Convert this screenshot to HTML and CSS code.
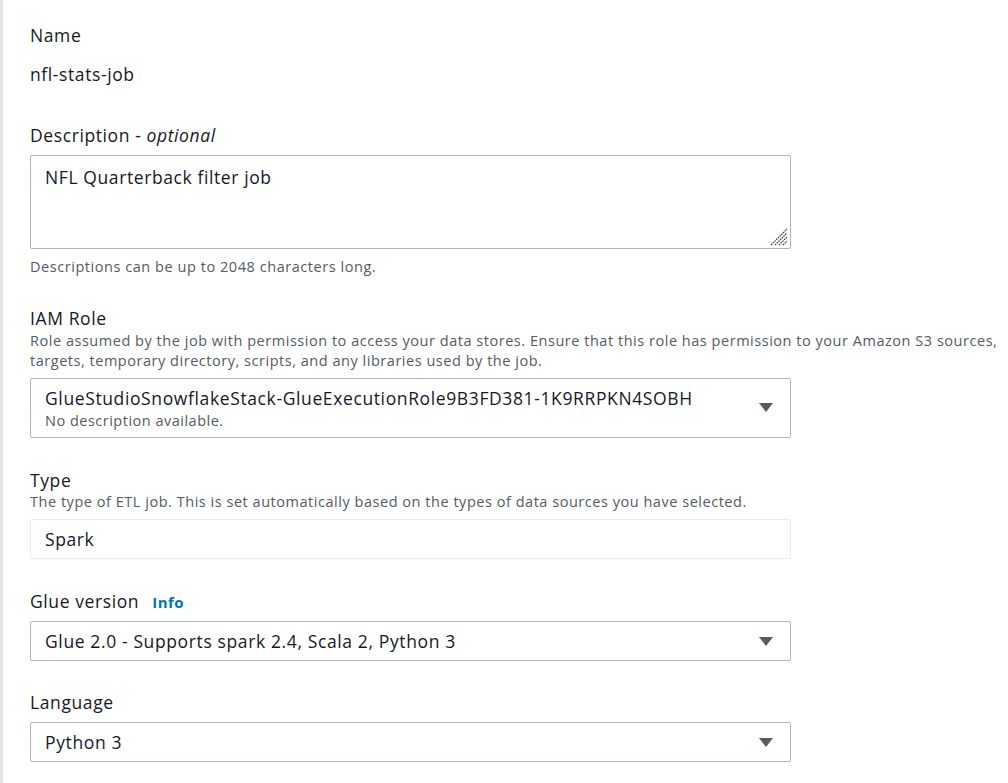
FILE: index.html
```html
<!DOCTYPE html>
<html lang="en">
<head>
<meta charset="utf-8">
<title>Job details</title>
<link rel="stylesheet" href="styles.css">
</head>
<body>
<div class="panel">
  <div class="field field-name">
    <div class="label">Name</div>
    <div class="static-value">nfl-stats-job</div>
  </div>

  <div class="field">
    <div class="label">Description - <i>optional</i></div>
    <div class="textarea-wrap">
      <textarea class="textarea">NFL Quarterback filter job</textarea>
      <svg class="grip" width="18" height="18" viewBox="0 0 18 18" aria-hidden="true">
        <g stroke="#3b3f45" stroke-width="1.2" stroke-dasharray="1.6 0.8">
          <line x1="1" y1="17" x2="17" y2="1"/>
          <line x1="5" y1="17" x2="17" y2="5"/>
          <line x1="9" y1="17" x2="17" y2="9"/>
          <line x1="13" y1="17" x2="17" y2="13"/>
        </g>
      </svg>
    </div>
    <div class="hint">Descriptions can be up to 2048 characters long.</div>
  </div>

  <div class="field">
    <div class="label">IAM Role</div>
    <div class="desc">Role assumed by the job with permission to access your data stores. Ensure that this role has permission to your Amazon S3 sources,<br>targets, temporary directory, scripts, and any libraries used by the job.</div>
    <div class="select select-tall">
      <div class="select-text">
        <div class="select-main">GlueStudioSnowflakeStack-GlueExecutionRole9B3FD381-1K9RRPKN4SOBH</div>
        <div class="select-sub">No description available.</div>
      </div>
      <span class="caret"></span>
    </div>
  </div>

  <div class="field">
    <div class="label">Type</div>
    <div class="desc desc-one">The type of ETL job. This is set automatically based on the types of data sources you have selected.</div>
    <div class="readonly">Spark</div>
  </div>

  <div class="field field-glue">
    <div class="label">Glue version <a class="info" href="#">Info</a></div>
    <div class="select">
      <div class="select-main">Glue 2.0 - Supports spark 2.4, Scala 2, Python 3</div>
      <span class="caret"></span>
    </div>
  </div>

  <div class="field field-last">
    <div class="label">Language</div>
    <div class="select">
      <div class="select-main">Python 3</div>
      <span class="caret"></span>
    </div>
  </div>
</div>
</body>
</html>
```

FILE: styles.css
```css
* { box-sizing: border-box; }

html, body {
  margin: 0;
  padding: 0;
  background: #ffffff;
}

body {
  font-family: "Open Sans", "Liberation Sans", sans-serif;
  color: #16191f;
  height: 783px;
  overflow: hidden;
}

.panel {
  border-left: 3px solid #e1e4e6;
  padding: 24px 0 0 27px;
  height: 783px;
}

.field {
  margin-bottom: 31px;
}

.field-name {
  margin-bottom: 39px;
}

.field-glue {
  margin-bottom: 30px;
}

.field-last {
  margin-bottom: 0;
}

.label {
  font-size: 17.5px;
  line-height: 22px;
  height: 22px;
  letter-spacing: 0.6px;
  color: #16191f;
}

.label i {
  font-style: italic;
}

.static-value {
  font-size: 17.5px;
  line-height: 22px;
  letter-spacing: 0.6px;
  margin-top: 17px;
}

.textarea-wrap {
  position: relative;
  width: 761px;
  margin-top: 9px;
}

.textarea {
  display: block;
  width: 761px;
  height: 94px;
  padding: 10px 14px;
  border: 1px solid #aab7b8;
  border-radius: 2px;
  font-family: inherit;
  font-size: 17.5px;
  line-height: 22px;
  letter-spacing: 0.6px;
  color: #16191f;
  resize: none;
  outline: none;
}

.grip {
  position: absolute;
  right: 3px;
  bottom: 3px;
}

.hint {
  font-size: 14.5px;
  line-height: 20px;
  letter-spacing: 0.55px;
  color: #545b64;
  margin-top: 8px;
  margin-bottom: -1px;
}

.desc {
  font-size: 14.5px;
  line-height: 20px;
  letter-spacing: 0.53px;
  color: #545b64;
  margin-top: 2px;
  white-space: nowrap;
}

.desc-one {
  margin-top: 1px;
}

.select {
  width: 761px;
  height: 40px;
  margin-top: 9px;
  border: 1px solid #aab7b8;
  border-radius: 2px;
  padding: 8px 17px 8px 14px;
  display: flex;
  align-items: center;
  justify-content: space-between;
}

.desc + .select,
.desc + .readonly {
  margin-top: 7px;
}

.select-tall {
  height: 60px;
  padding-top: 8px;
  padding-bottom: 6px;
  align-items: flex-start;
}

.select-main {
  font-size: 17.5px;
  line-height: 22px;
  letter-spacing: 0.62px;
  color: #16191f;
}

.select-sub {
  font-size: 14.5px;
  line-height: 20px;
  letter-spacing: 0.5px;
  margin-top: 2px;
  color: #545b64;
}

.select-tall .caret {
  margin-top: 16px;
}

.caret {
  width: 0;
  height: 0;
  border-left: 7px solid transparent;
  border-right: 7px solid transparent;
  border-top: 9px solid #545b64;
  flex: none;
}

.readonly {
  width: 761px;
  height: 40px;
  border: 1px solid #eaeded;
  border-radius: 2px;
  padding: 8px 14px;
  font-size: 17.5px;
  line-height: 22px;
  letter-spacing: 0.6px;
  color: #16191f;
}

.info {
  font-size: 15px;
  line-height: 1;
  font-weight: 700;
  letter-spacing: 0.4px;
  color: #0073bb;
  text-decoration: none;
  margin-left: 8px;
}
```
